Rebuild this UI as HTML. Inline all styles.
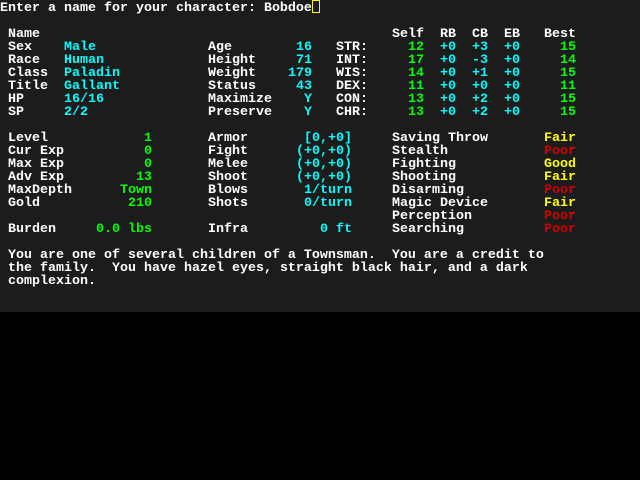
<!DOCTYPE html>
<html><head><meta charset="utf-8"><style>
html,body{margin:0;padding:0;background:#000;width:640px;height:480px;overflow:hidden}
#bg{position:absolute;left:0;top:0;width:640px;height:312px;background:#1c1c1c}
.t{position:absolute;font-family:"Liberation Mono",monospace;font-size:13.33px;line-height:13px;height:13px;white-space:pre;font-weight:bold;color:#fff}
.c{color:#00ffff}.g{color:#00ff00}.y{color:#ffff00}.r{color:#cc0000}
#cur{position:absolute;left:312px;top:0;width:6px;height:11px;border:1px solid #ffff00}
</style></head><body>
<div id="bg"></div>
<div id="cur"></div>
<div id="root"></div>
<script>
var R=document.getElementById('root');
function L(r,c,t,cl){var s=document.createElement('span');s.className='t '+(cl||'');s.style.top=(r*13+2)+'px';s.style.left=(c*8)+'px';s.textContent=t;R.appendChild(s);}
function E(r,e,t,cl){L(r,e-t.length+1,t,cl);}
L(0,0,"Enter a name for your character: Bobdoe");
L(2,1,"Name");L(2,49,"Self");L(2,55,"RB");L(2,59,"CB");L(2,63,"EB");L(2,68,"Best");
var a=["Sex","Race","Class","Title","HP","SP"],av=["Male","Human","Paladin","Gallant","16/16","2/2"];
var b=["Age","Height","Weight","Status","Maximize","Preserve"],bv=["16","71","179","43","Y","Y"];
var s=["STR:","INT:","WIS:","DEX:","CON:","CHR:"],sv=["12","17","14","11","13","13"],cb=["+3","-3","+1","+0","+2","+2"],be=["15","14","15","11","15","15"];
for(var i=0;i<6;i++){var r=3+i;L(r,1,a[i]);L(r,8,av[i],'c');L(r,26,b[i]);E(r,38,bv[i],'c');L(r,42,s[i]);E(r,52,sv[i],'g');L(r,55,"+0",'c');L(r,59,cb[i],'c');L(r,63,"+0",'c');E(r,71,be[i],'g');}
var d=["Level","Cur Exp","Max Exp","Adv Exp","MaxDepth","Gold"],dv=["1","0","0","13","Town","210"];
var m=["Armor","Fight","Melee","Shoot","Blows","Shots"],mv=["[0,+0]","(+0,+0)","(+0,+0)","(+0,+0)","1/turn","0/turn"];
for(i=0;i<6;i++){r=10+i;L(r,1,d[i]);E(r,18,dv[i],'g');L(r,26,m[i]);E(r,43,mv[i],'c');}
L(17,1,"Burden");E(17,18,"0.0 lbs",'g');L(17,26,"Infra");E(17,43,"0 ft",'c');
var k=["Saving Throw","Stealth","Fighting","Shooting","Disarming","Magic Device","Perception","Searching"],kv=["Fair","Poor","Good","Fair","Poor","Fair","Poor","Poor"];
for(i=0;i<8;i++){L(10+i,49,k[i]);L(10+i,68,kv[i],kv[i]=="Poor"?'r':'y');}
L(19,1,"You are one of several children of a Townsman.  You are a credit to");
L(20,1,"the family.  You have hazel eyes, straight black hair, and a dark");
L(21,1,"complexion.");
</script>
</body></html>
